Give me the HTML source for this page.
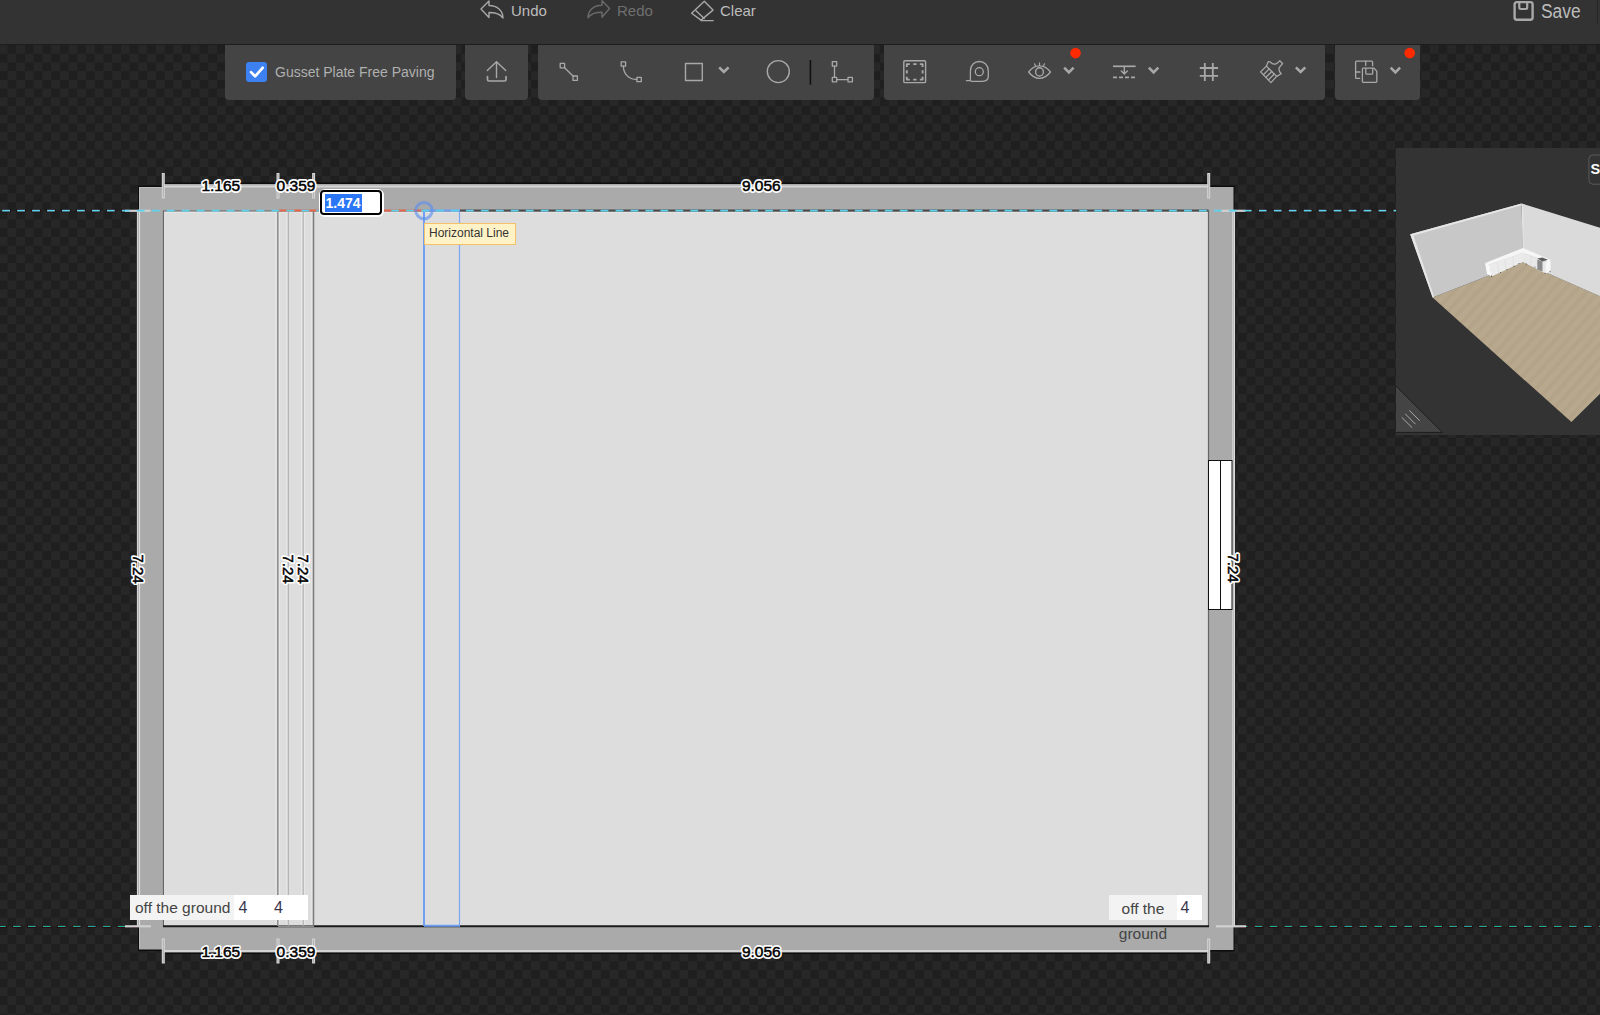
<!DOCTYPE html>
<html><head><meta charset="utf-8">
<style>
html,body{margin:0;padding:0;width:1600px;height:1015px;overflow:hidden;}
body{position:relative;font-family:"Liberation Sans",sans-serif;background-color:#222;
background-image:conic-gradient(#272727 0 25%,#1f1f1f 0 50%,#272727 0 75%,#1f1f1f 0);
background-size:17.46px 17.46px;background-position:7.5px 45px;}
.abs{position:absolute;}
#topbar{left:0;top:0;width:1600px;height:44px;background:#333;border-bottom:1px solid #1d1d1d;}
.tb{position:absolute;color:#bdbdbd;font-size:15px;line-height:20px;white-space:nowrap;}
.panel{position:absolute;top:45px;height:54.5px;background:#444;border-radius:0 0 4px 4px;}
svg{position:absolute;left:0;top:0;overflow:visible;}
.dimo,.dimh,.dimf{font-family:"Liberation Sans",sans-serif;font-size:15px;stroke-linejoin:round;}
.dimo{display:none;}
.dimh{fill:#fff;stroke:#fff;stroke-width:3.8px;}
.dimf{fill:#000;stroke:#000;stroke-width:0.5px;}
</style></head><body>

<div id="topbar" class="abs"></div>

<!-- top bar items -->
<div class="tb" style="left:511px;top:1px;">Undo</div>
<div class="tb" style="left:617px;top:1px;color:#6f6f6f;">Redo</div>
<div class="tb" style="left:720px;top:1px;">Clear</div>
<div class="tb" style="left:1541px;top:-1px;font-size:20px;line-height:24px;transform:scaleX(0.87);transform-origin:0 0;">Save</div>

<!-- panels -->
<div class="panel" style="left:225px;width:230.5px;"></div>
<div class="panel" style="left:465px;width:62.5px;"></div>
<div class="panel" style="left:538px;width:336px;"></div>
<div class="panel" style="left:883.5px;width:441.5px;"></div>
<div class="panel" style="left:1335px;width:84.5px;"></div>

<div class="abs" style="left:246px;top:61.5px;width:20.5px;height:20.5px;background:#3d80f2;border-radius:3px;"></div>
<div class="tb" style="left:275px;top:62px;font-size:14px;color:#b0b0b0;">Gusset Plate Free Paving</div>

<!-- toolbar + topbar icons -->
<svg width="1600" height="110" viewBox="0 0 1600 110" style="z-index:2">
  <g fill="none" stroke="#a8a8a8" stroke-width="1.4" stroke-linejoin="round" stroke-linecap="round">
    <!-- undo -->
    <path d="M481,9 L489,1 L489,5.5 C497,5.5 503,10.5 503,18 C500,13.5 495,12.5 489,12.5 L489,17.5 Z"/>
    <!-- clear (eraser) -->
    <path d="M704.3,1.3 L713,10.1 L701,20.1 L691.6,13.2 Z"/>
    <path d="M696,10.8 L704.2,18.5"/>
    <path d="M701,20.6 H713.2"/>
    <!-- upload -->
    <path d="M487.3,70.5 L496.5,61.7 L505.7,70.5"/>
    <path d="M496.5,62 V77.6"/>
    <path d="M487.5,76.6 V79.4 Q487.5,81 489,81 H504.4 Q506,81 506,79.4 V76.6" stroke-width="1.7"/>
    <!-- line tool -->
    <rect x="560.2" y="63.4" width="4.4" height="4.4" stroke-width="1.3"/>
    <rect x="573" y="76" width="4.4" height="4.4" stroke-width="1.3"/>
    <path d="M564.6,67.8 L573,76" stroke-width="1.3"/>
    <!-- curve tool -->
    <rect x="621.2" y="61.8" width="4.4" height="4.4" stroke-width="1.3"/>
    <rect x="636.9" y="77.3" width="4.4" height="4.4" stroke-width="1.3"/>
    <path d="M623.4,66.2 C623.4,73 628,79.5 636.9,79.5" stroke-width="1.3"/>
    <!-- rect tool -->
    <rect x="685.5" y="63.5" width="16.8" height="17" stroke-width="1.4"/>
    <!-- circle -->
    <circle cx="778.3" cy="71.6" r="11" stroke-width="1.4"/>
    <!-- corner tool -->
    <rect x="832.3" y="61.7" width="4.4" height="4.4" stroke-width="1.3"/>
    <rect x="832.3" y="77.4" width="4.4" height="4.4" stroke-width="1.3"/>
    <rect x="848" y="77.4" width="4.4" height="4.4" stroke-width="1.3"/>
    <path d="M834.5,66.1 V77.4 M836.7,79.6 H848" stroke-width="1.3"/>
    <!-- select frame -->
    <rect x="903.8" y="60.8" width="21.8" height="21.8" rx="1.2" stroke-width="1.4"/>
    <path d="M906.8,67 V64.1 H909.8 M913.2,64.1 H916.6 M919.8,64.1 H922.6 V67 M922.6,70.2 V73.5 M922.6,76.7 V79.6 H919.8 M916.6,79.6 H913.2 M909.8,79.6 H906.8 V76.7 M906.8,73.5 V70.2" stroke-width="1.9" stroke-linecap="butt"/>
    <!-- tape measure -->
    <path d="M966.4,80.6 H970.4 V70.8 C970.4,65 974.5,61.5 979.3,61.5 C984.3,61.5 988.3,65 988.3,70.8 V76 C988.3,79.5 986,81.3 982.5,81.3 H972 C971,81.3 970.4,80.8 970.4,80.3" stroke-width="1.3"/>
    <circle cx="979.3" cy="71.7" r="4" stroke-width="1.3"/>
    <!-- eye -->
    <path d="M1028.6,72 C1032,67.5 1035.5,65.8 1039.5,65.8 C1043.5,65.8 1047,67.5 1050.5,72 C1047,76.5 1043.5,78.3 1039.5,78.3 C1035.5,78.3 1032,76.5 1028.6,72 Z" stroke-width="1.3"/>
    <ellipse cx="1039.5" cy="71.9" rx="3.9" ry="4.1" stroke-width="1.4"/>
    <path d="M1039.5,62.8 V65.5 M1034.5,63.8 L1035.6,66 M1044.5,63.8 L1043.4,66" stroke-width="1.2"/>
    <!-- align -->
    <path d="M1113,66.3 H1135.6" stroke-width="1.7" stroke-linecap="butt"/>
    <path d="M1124.3,67 V73.6 M1121.3,71 L1124.3,73.9 L1127.3,71" stroke-width="1.4"/>
    <path d="M1113,77.3 H1135.6" stroke-width="1.7" stroke-dasharray="4 2" stroke-linecap="butt"/>
    <!-- hash -->
    <path d="M1204.8,62.9 V80.9 M1212.8,62.9 V80.9 M1199.8,68 H1218.1 M1199.8,75.8 H1218.1" stroke-width="1.8" stroke-linecap="butt"/>
    <!-- brush -->
    <path d="M1260.6,71.9 L1266.4,66.1 L1276.6,76.4 L1270.9,82.6 Z" stroke-width="1.3"/>
    <path d="M1263.4,74.7 L1269.2,68.9 M1266.0,77.3 L1271.8,71.5 M1268.5,79.9 L1274.2,74.0" stroke-width="1.3"/>
    <path d="M1266.4,66.1 L1268.4,61.5 L1270.5,62.2 C1272,64 1274,64.6 1276,63.8 C1277.5,63.2 1278.5,62 1279.7,60.8 L1282.6,63.5 C1281.5,64.8 1280.2,66 1279.3,67.6 C1278.5,69.5 1279.2,71.8 1281.2,73.8 L1276.6,76.4" stroke-width="1.3"/>
    <!-- copy floppy -->
    <path d="M1359.8,78.3 H1356.5 Q1355.6,78.3 1355.6,77.4 V62 Q1355.6,61.1 1356.5,61.1 H1371.8 Q1372.6,61.1 1372.6,62 V65.6" stroke-width="1.3"/>
    <path d="M1365.7,61.2 V65.6 M1355.6,72 H1359.9" stroke-width="1.3"/>
    <path d="M1363.2,68.1 H1374 L1376.8,71.2 V81.6 Q1376.8,82.4 1376,82.4 H1363.2 Q1362.4,82.4 1362.4,81.6 V68.9 Q1362.4,68.1 1363.2,68.1 Z" stroke-width="1.3"/>
    <path d="M1365.8,68.3 V73.3 Q1365.8,74.2 1366.7,74.2 H1371.8 Q1372.7,74.2 1372.7,73.3 V68.3" stroke-width="1.3"/>
  </g>
  <!-- redo dim -->
  <path d="M609.5,8.5 L602,0.8 L602,5.3 C594,5.3 588,10 588,17.8 C591,13.2 596,12.2 602,12.2 L602,17.3 Z" fill="none" stroke="#6a6a6a" stroke-width="1.4" stroke-linejoin="round"/>
  <!-- save -->
  <rect x="1514.6" y="2.1" width="18" height="17.7" rx="2.2" fill="none" stroke="#a8a8a8" stroke-width="2.4"/>
  <path d="M1519.3,2 V7.6 Q1519.3,9 1520.7,9 H1525.8 Q1527.2,9 1527.2,7.6 V2" fill="none" stroke="#a8a8a8" stroke-width="2.2"/>
  <!-- chevrons -->
  <g fill="none" stroke="#a8a8a8" stroke-width="2.6" stroke-linejoin="miter" stroke-linecap="butt">
    <path d="M719.2,67.3 L723.9,72 L728.6,67.3"/>
    <path d="M1064.2,67.6 L1068.9,72.3 L1073.6,67.6"/>
    <path d="M1148.9,67.6 L1153.6,72.3 L1158.3,67.6"/>
    <path d="M1295.9,67.3 L1300.6,72 L1305.3,67.3"/>
    <path d="M1390.7,67.6 L1395.4,72.3 L1400.1,67.6"/>
  </g>
  <!-- separator -->
  <line x1="810.4" y1="60" x2="810.4" y2="84.7" stroke="#111" stroke-width="1.6"/>
  <!-- red dots -->
  <circle cx="1075.5" cy="53.1" r="5.3" fill="#ff2a00"/>
  <circle cx="1409.7" cy="53.1" r="5.3" fill="#ff2a00"/>
  <!-- checkbox check -->
  <path d="M251,72.1 L255.1,76.3 L262.6,67.8" fill="none" stroke="#fff" stroke-width="2.7" stroke-linecap="round" stroke-linejoin="round"/>
</svg>

<!-- room svg -->
<svg width="1600" height="1015" viewBox="0 0 1600 1015">
  <!-- dash halos -->
  <g stroke="#2a0a0a" stroke-dasharray="9.4 5.56" stroke-dashoffset="0.8">
    <line x1="2.2" y1="210.6" x2="1396" y2="210.6" stroke-width="3.4"/>
    <line x1="-1.96" y1="926.4" x2="1600" y2="926.4" stroke-width="3"/>
  </g>
  <line x1="-1.96" y1="926.4" x2="1600" y2="926.4" stroke="#1fa99b" stroke-width="1.4" stroke-dasharray="7.8 7.16"/>
  <!-- wall outline (dark) -->
  <path d="M162,182.5 H1210 V185.5 H1234.5 V210 H1236 V927 H1234.5 V951.5 H1210 V954 H162 V951 H138 V927 H136 V210 H138 V185.5 H162 Z" fill="#0d0d0d"/>
  <!-- walls -->
  <path d="M163,184 H1208.5 V187 H1233.5 V211 H1235 V926 H1233.5 V950 H1208.5 V952.5 H163 V949.5 H139 V926 H137 V211 H139 V187 H163 Z" fill="#aaa"/>
  <!-- corner block light edges -->
  <path d="M139.5,211 V187.5 H163" fill="none" stroke="#bdbdbd" stroke-width="1"/>
  <path d="M139.5,926 V949" fill="none" stroke="#bdbdbd" stroke-width="1"/>
  <!-- dimension lines (light) -->
  <g stroke="#d4d4d4" fill="none">
    <line x1="163" y1="186.5" x2="1208.5" y2="186.5" stroke-width="2"/>
    <line x1="163" y1="951" x2="1208.5" y2="951" stroke-width="2"/>
    <line x1="137.4" y1="211" x2="137.4" y2="926" stroke-width="1.2"/>
    <line x1="139.5" y1="211" x2="139.5" y2="926" stroke-width="1.2" stroke="#dcdcdc"/>
    <line x1="1232.8" y1="211" x2="1232.8" y2="926" stroke-width="1.2"/>
    <line x1="1234.5" y1="211" x2="1234.5" y2="926" stroke-width="1.2" stroke="#dcdcdc"/>
  </g>
  <!-- floor -->
  <rect x="163.5" y="211" width="1045" height="715" fill="#ddd"/>
  <path d="M164.5,925 V212 H1207.5" fill="none" stroke="#ececec" stroke-width="1"/>
  <path d="M163.5,926 V211 H1208.5 V926" fill="none" stroke="#656565" stroke-width="1.2"/>
  <line x1="163" y1="926.2" x2="1209" y2="926.2" stroke="#1a1a1a" stroke-width="2"/>
  <line x1="278" y1="926.2" x2="314" y2="926.2" stroke="#8a8a8a" stroke-width="2"/>
  <g stroke="#e8e8e8" stroke-width="1">
    <line x1="276" y1="212" x2="276" y2="925"/>
    <line x1="279.6" y1="212" x2="279.6" y2="925"/>
    <line x1="286.8" y1="212" x2="286.8" y2="925"/>
    <line x1="301.7" y1="212" x2="301.7" y2="925"/>
    <line x1="304.7" y1="212" x2="304.7" y2="925"/>
    <line x1="311.8" y1="212" x2="311.8" y2="925"/>
  </g>
  <!-- interior thin lines -->
  <line x1="277.8" y1="211" x2="277.8" y2="926" stroke="#8c8c8c" stroke-width="1.5"/>
  <line x1="288.3" y1="211" x2="288.3" y2="926" stroke="#ababab" stroke-width="1"/>
  <line x1="303.2" y1="211" x2="303.2" y2="926" stroke="#ababab" stroke-width="1"/>
  <line x1="313.5" y1="211" x2="313.5" y2="926" stroke="#7a7a7a" stroke-width="1.5"/>
  <!-- blue guide lines -->
  <line x1="424" y1="211" x2="424" y2="926" stroke="#6f9ef2" stroke-width="2"/>
  <line x1="459.5" y1="211" x2="459.5" y2="926" stroke="#7aa6f2" stroke-width="1.2"/>
  <line x1="424" y1="925.8" x2="460" y2="925.8" stroke="#6f9ef2" stroke-width="2"/>
  <!-- colored under-segments on top line -->
  <line x1="278" y1="210.6" x2="423" y2="210.6" stroke="#e2644a" stroke-width="2"/>
  <line x1="423" y1="210.6" x2="460" y2="210.6" stroke="#6f9ef2" stroke-width="2"/>
  <line x1="460" y1="210.6" x2="1208.5" y2="210.6" stroke="#4a4a4a" stroke-width="2"/>
  <!-- window -->
  <rect x="1208.5" y="460.5" width="23.5" height="149" fill="#fff" stroke="#111" stroke-width="1"/>
  <line x1="1220.5" y1="460.5" x2="1220.5" y2="609.5" stroke="#111" stroke-width="1"/>
  
  <g stroke="#d0d0d0" stroke-width="2.2">
    <line x1="125" y1="210.8" x2="150.5" y2="210.8"/>
    <line x1="1221" y1="210.8" x2="1245.5" y2="210.8"/>
  </g>
  <!-- dashed guide lines -->
  <g stroke-dasharray="7.8 7.16" stroke-linecap="butt">
    <line x1="2.2" y1="210.6" x2="1396" y2="210.6" stroke="#5cd3ee" stroke-width="1.8"/>
  </g>
  <!-- extension lines -->
  <g stroke="#d0d0d0" stroke-width="2.2">
    <line x1="125" y1="926.3" x2="151" y2="926.3"/>
    <line x1="1216" y1="926.3" x2="1246" y2="926.3"/>
  </g>
  <!-- ticks -->
  <g stroke="#d6d6d6" stroke-width="3">
    <line x1="163.3" y1="173" x2="163.3" y2="198.5"/>
    <line x1="278" y1="173" x2="278" y2="198.5"/>
    <line x1="313.6" y1="173" x2="313.6" y2="198.5"/>
    <line x1="1208.7" y1="173" x2="1208.7" y2="198.5"/>
    <line x1="163.3" y1="938.5" x2="163.3" y2="963.5"/>
    <line x1="278" y1="938.5" x2="278" y2="963.5"/>
    <line x1="313.6" y1="938.5" x2="313.6" y2="963.5"/>
    <line x1="1208.7" y1="938.5" x2="1208.7" y2="963.5"/>
  </g>
  <g stroke="#b0b0b0" stroke-width="1">
    <line x1="163.3" y1="174" x2="163.3" y2="197.5"/>
    <line x1="278" y1="174" x2="278" y2="197.5"/>
    <line x1="313.6" y1="174" x2="313.6" y2="197.5"/>
    <line x1="1208.7" y1="174" x2="1208.7" y2="197.5"/>
    <line x1="163.3" y1="939.5" x2="163.3" y2="962.5"/>
    <line x1="278" y1="939.5" x2="278" y2="962.5"/>
    <line x1="313.6" y1="939.5" x2="313.6" y2="962.5"/>
    <line x1="1208.7" y1="939.5" x2="1208.7" y2="962.5"/>
  </g>
  <!-- dimension texts -->
  <g class="dimo" text-anchor="middle">
    <text x="220.8" y="191" style="font-size:15.5px">1.165</text>
    <text x="296" y="191" style="font-size:15.5px">0.359</text>
    <text x="761.3" y="191" style="font-size:15.5px">9.056</text>
    <text x="220.8" y="957.3" style="font-size:15.5px">1.165</text>
    <text x="296" y="957.3" style="font-size:15.5px">0.359</text>
    <text x="761.3" y="957.3" style="font-size:15.5px">9.056</text>
    <text transform="translate(133,569) rotate(90)">7.24</text>
    <text transform="translate(282.8,569) rotate(90)">7.24</text>
    <text transform="translate(298.3,569) rotate(90)">7.24</text>
    <text transform="translate(1228.2,568) rotate(90)">7.24</text>
  </g>
  <g class="dimh" text-anchor="middle">
    <text x="220.8" y="191" style="font-size:15.5px">1.165</text>
    <text x="296" y="191" style="font-size:15.5px">0.359</text>
    <text x="761.3" y="191" style="font-size:15.5px">9.056</text>
    <text x="220.8" y="957.3" style="font-size:15.5px">1.165</text>
    <text x="296" y="957.3" style="font-size:15.5px">0.359</text>
    <text x="761.3" y="957.3" style="font-size:15.5px">9.056</text>
    <text transform="translate(133,569) rotate(90)">7.24</text>
    <text transform="translate(282.8,569) rotate(90)">7.24</text>
    <text transform="translate(298.3,569) rotate(90)">7.24</text>
    <text transform="translate(1228.2,568) rotate(90)">7.24</text>
  </g>
  <g class="dimf" text-anchor="middle">
    <text x="220.8" y="191" style="font-size:15.5px">1.165</text>
    <text x="296" y="191" style="font-size:15.5px">0.359</text>
    <text x="761.3" y="191" style="font-size:15.5px">9.056</text>
    <text x="220.8" y="957.3" style="font-size:15.5px">1.165</text>
    <text x="296" y="957.3" style="font-size:15.5px">0.359</text>
    <text x="761.3" y="957.3" style="font-size:15.5px">9.056</text>
    <text transform="translate(133,569) rotate(90)">7.24</text>
    <text transform="translate(282.8,569) rotate(90)">7.24</text>
    <text transform="translate(298.3,569) rotate(90)">7.24</text>
    <text transform="translate(1228.2,568) rotate(90)">7.24</text>
  </g>
  <!-- blue snap circle -->
  <circle cx="424" cy="210.6" r="8.2" fill="none" stroke="#5b8ef0" stroke-opacity="0.62" stroke-width="3"/>
</svg>

<!-- input box -->
<div class="abs" style="left:318.5px;top:188.8px;width:65px;height:28px;background:#fff;border-radius:6px;"></div>
<div class="abs" style="left:319.7px;top:190.2px;width:58.2px;height:20.7px;border:2px solid #000;border-radius:4px;background:#fff;"></div>
<div class="abs" style="left:324.7px;top:194px;width:37.3px;height:17.8px;background:#2a76f5;"></div>
<div class="abs" style="left:325.5px;top:193.5px;font-size:14px;line-height:18px;font-weight:bold;color:#fff;">1.474</div>

<!-- tooltip -->
<div class="abs" style="left:424px;top:223px;width:90px;height:20px;background:#fff2c6;border:1px solid #f4c06a;"></div>
<div class="abs" style="left:429px;top:225px;font-size:12px;line-height:16px;color:#333;white-space:nowrap;">Horizontal Line</div>

<!-- off the ground labels -->
<div class="abs" style="left:130.3px;top:895px;width:104px;height:25px;background:#f3f3f3;"></div>
<div class="abs" style="left:234.3px;top:895px;width:73.6px;height:25px;background:#fff;"></div>
<div class="abs" style="left:135px;top:899px;font-size:15.5px;line-height:18px;color:#444;white-space:nowrap;">off the ground</div>
<div class="abs" style="left:238.4px;top:898.5px;font-size:16px;line-height:18px;color:#3b3650;">4</div>
<div class="abs" style="left:274px;top:898.5px;font-size:16px;line-height:18px;color:#3b3650;">4</div>

<div class="abs" style="left:1109.3px;top:895px;width:67.3px;height:25px;background:#f3f3f3;"></div>
<div class="abs" style="left:1176.6px;top:895px;width:25.5px;height:25px;background:#fff;"></div>
<div class="abs" style="left:1109.3px;top:895.5px;width:67.3px;text-align:center;font-size:15.5px;line-height:25px;color:#444;">off the<br>ground</div>
<div class="abs" style="left:1180.5px;top:898.5px;font-size:16px;line-height:18px;color:#3b3650;">4</div>

<!-- 3D preview -->
<div class="abs" style="left:1396px;top:148px;width:204px;height:286.5px;background:#333;"></div>
<svg width="1600" height="1015" viewBox="0 0 1600 1015" style="z-index:3">
  <defs>
    <pattern id="wood" patternUnits="userSpaceOnUse" width="9" height="1.8" patternTransform="rotate(42)">
      <rect width="9" height="1.8" fill="#b6a68b"/>
      <rect x="0" y="0" width="5" height="0.6" fill="#bdad93"/>
      <rect x="4" y="0.9" width="4" height="0.6" fill="#ae9e84"/>
    </pattern>
    <clipPath id="pv"><rect x="1396" y="148" width="204" height="286.5"/></clipPath>
  </defs>
  <g clip-path="url(#pv)">
    <!-- floor -->
    <polygon points="1432.6,297.6 1523,262.3 1600,296.3 1600,393.8 1571.4,422.1" fill="url(#wood)"/>
    <!-- left wall -->
    <polygon points="1410.2,234.2 1521.6,203.4 1523,262.3 1432.6,297.6" fill="#c7c7c7"/>
    <polygon points="1410.2,234.2 1521.6,203.4 1521.8,205.2 1413.5,235.4 1434.2,296.9 1432.6,297.6" fill="#e6e6e6"/>
    <!-- right wall -->
    <polygon points="1521.6,203.4 1600,227.8 1600,296.3 1523,262.3" fill="#dadada"/>
    <line x1="1522.6" y1="204" x2="1523.2" y2="250" stroke="#e8e8e8" stroke-width="1"/>
    <!-- cabinets -->
    <polygon points="1485,263 1523,248 1523,252.75 1489.5,264.5" fill="#f6f6f6"/>
    <polygon points="1489.5,264.5 1523,252.75 1523,262 1491.5,276.5" fill="#ebebeb"/>
    <polygon points="1485,263 1489.5,264.5 1491.5,276.5 1487,274" fill="#f9f9f9"/>
    <polygon points="1523,248 1550.5,259.75 1548,261.5 1523,252.75" fill="#f6f6f6"/>
    <polygon points="1523,252.75 1545.5,262 1545.5,273.5 1523,262" fill="#e8e8e8"/>
    <polygon points="1545.5,262 1550.5,260 1550.5,271.5 1545.5,273.5" fill="#f7f7f7"/>
    <polygon points="1537.3,259.4 1542.5,261.4 1542.5,271.6 1537.3,269.5" fill="#8a8a8a"/>
    <polygon points="1537.3,258.4 1542.3,257.4 1548,259.8 1542.5,261.4" fill="#5e5e5e"/>
    <g stroke="#d4d4d4" stroke-width="0.5">
      <line x1="1497" y1="262" x2="1499" y2="273"/>
      <line x1="1505" y1="259.5" x2="1506" y2="270"/>
      <line x1="1513" y1="256.5" x2="1513.5" y2="266.5"/>
      <line x1="1531" y1="256" x2="1531" y2="265.5"/>
    </g>
    <g fill="#555">
      <circle cx="1491.5" cy="276.3" r="0.7"/><circle cx="1500.5" cy="272.5" r="0.6"/><circle cx="1507" cy="269.5" r="0.6"/>
      <circle cx="1514" cy="266.3" r="0.6"/><circle cx="1519" cy="263.5" r="0.6"/><circle cx="1526.5" cy="264" r="0.6"/>
      <circle cx="1535" cy="267" r="0.6"/><circle cx="1545" cy="273.3" r="0.6"/><circle cx="1550" cy="271.3" r="0.6"/>
    </g>
    <!-- corner triangle -->
    <polygon points="1395.5,385.5 1442.4,432.4 1395.5,432.4" fill="#444" stroke="#1c1c1c" stroke-width="1"/>
    <g stroke="#b4b4b4" stroke-width="0.9">
      <line x1="1401.7" y1="417.3" x2="1412.1" y2="427.6"/>
      <line x1="1405.2" y1="413.8" x2="1415.5" y2="424.2"/>
      <line x1="1409.3" y1="410.4" x2="1419.7" y2="420.7"/>
    </g>
    <!-- S button -->
    <rect x="1588.9" y="155" width="20" height="29.2" rx="4" fill="#333" stroke="#5a5a5a" stroke-width="1"/>
    <text x="1590.6" y="174.2" font-family="Liberation Sans" font-size="14.5" font-weight="bold" fill="#fff" letter-spacing="-0.5">Se</text>
  </g>
</svg>
<!-- right edge divider in topbar -->
<div class="abs" style="left:1596.5px;top:0;width:1px;height:22.5px;background:#262626;z-index:3"></div>

</body></html>
